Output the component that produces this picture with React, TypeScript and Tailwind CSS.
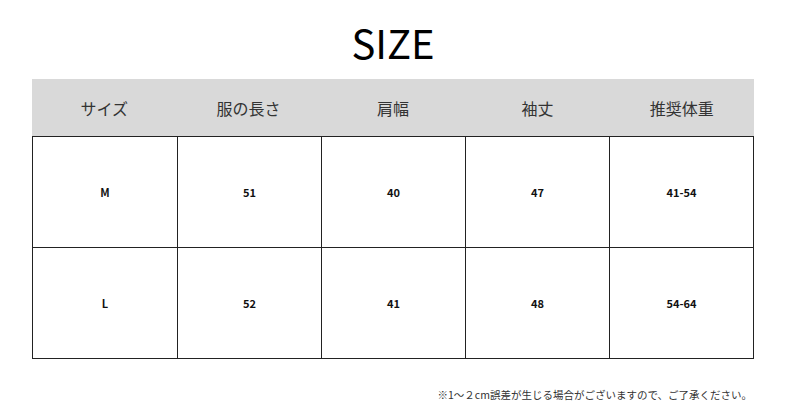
const headers = ["サイズ", "服の長さ", "肩幅", "袖丈", "推奨体重"]
const rows = [
  ["M", "51", "40", "47", "41-54"],
  ["L", "52", "41", "48", "54-64"],
]

export default function App() {
  return (
    <div
      className="w-[786px] h-[411px] bg-white text-[#222] overflow-hidden"
      style={{ fontFamily: '"Noto Sans CJK JP", "Noto Sans", sans-serif' }}
    >
      <h1 className="h-[79px] pt-[14px] text-center text-[40px] leading-[56px] font-normal text-black">SIZE</h1>
      <div className="mx-[32px] w-[722px]">
        <div className="grid grid-cols-5 h-[58px] bg-[#d9d9d9] border-b border-[#222]">
          {headers.map((h) => (
            <div key={h} className="flex items-center justify-center text-[16px] text-[#333]">
              {h}
            </div>
          ))}
        </div>
        {rows.map((r, i) => (
          <div key={i} className="grid grid-cols-5 h-[111px] border-x border-b border-[#222]">
            {r.map((c, j) => (
              <div
                key={j}
                className={`flex items-center justify-center text-[11px] font-bold text-[#111] ${j > 0 ? "border-l border-[#222]" : ""}`}
              >
                {c}
              </div>
            ))}
          </div>
        ))}
      </div>
      <p className="mt-[28px] pr-[34px] text-right text-[10.5px] text-[#333]">
        ※1～２cm誤差が生じる場合がございますので、ご了承ください。
      </p>
    </div>
  )
}
